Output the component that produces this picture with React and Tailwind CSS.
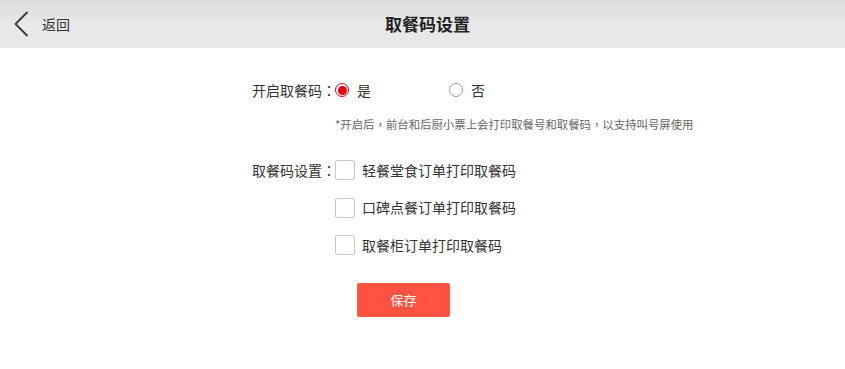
import React from "react";

const font = { fontFamily: '"Noto Sans CJK SC", "Noto Sans", sans-serif' };
const tc = { fontFamily: '"Noto Sans CJK TC", "Noto Sans CJK SC", sans-serif' };

function Radio({ checked }) {
  return checked ? (
    <span className="flex h-[14px] w-[14px] shrink-0 items-center justify-center rounded-full border border-[#e60012] bg-white">
      <span className="h-[9px] w-[9px] rounded-full bg-[#e60012]" />
    </span>
  ) : (
    <span className="h-[14px] w-[14px] shrink-0 rounded-full border border-[#9a9a9a] bg-white" />
  );
}

function Check({ label }) {
  return (
    <div className="flex h-[20px] items-center">
      <span className="h-[20px] w-[20px] shrink-0 rounded-[2px] border border-[#c8c8c8] bg-white" />
      <span className="ml-[7px] whitespace-nowrap text-[14px] text-[#333]">{label}</span>
    </div>
  );
}

export default function App() {
  return (
    <div className="h-[369px] w-[845px] bg-white" style={font}>
      <div className="relative flex h-[48px] items-center bg-gradient-to-b from-[#dcdcdc] via-[#e8e8e8] to-[#e8e8e8]">
        <div className="flex items-center pl-[13px]">
          <svg width="16" height="26" viewBox="0 0 16 26" fill="none">
            <path d="M14.5 1 L2.5 13 L14.5 25" stroke="#333" strokeWidth="1.8" />
          </svg>
          <span className="ml-[13px] text-[14px] text-[#333]">返回</span>
        </div>
        <div className="pointer-events-none absolute left-0 right-0 top-0 flex h-[48px] items-center justify-center pl-[10px]">
          <span className="text-[17px] font-bold text-[#222]">取餐码设置</span>
        </div>
      </div>

      <div className="ml-[252px] flex flex-col">
        <div className="mt-[32px] flex h-[20px] items-center whitespace-nowrap text-[14px] text-[#333]">
          <span className="w-[83px] shrink-0">
            开启取餐码<span style={tc}>：</span>
          </span>
          <Radio checked />
          <span className="ml-[8px]">是</span>
          <span className="ml-[78px]" />
          <Radio />
          <span className="ml-[8px]">否</span>
        </div>
        <div className="ml-[83px] mt-[16px] h-[16px] whitespace-nowrap text-[11.4px] leading-[16px] text-[#666]">
          *开启后<span style={tc}>，</span>前台和后厨小票上会打印取餐号和取餐码<span style={tc}>，</span>以支持叫号屏使用
        </div>
        <div className="mt-[28px] flex items-start">
          <span className="flex h-[20px] w-[83px] shrink-0 items-center whitespace-nowrap text-[14px] text-[#333]">
            取餐码设置<span style={tc}>：</span>
          </span>
          <div className="flex flex-col gap-[17.5px]">
            <Check label="轻餐堂食订单打印取餐码" />
            <Check label="口碑点餐订单打印取餐码" />
            <Check label="取餐柜订单打印取餐码" />
          </div>
        </div>
        <button className="ml-[105px] mt-[28px] flex h-[34px] w-[93px] items-center justify-center rounded-[2px] bg-[#ff5243] text-[13px] text-white">
          保存
        </button>
      </div>
    </div>
  );
}
